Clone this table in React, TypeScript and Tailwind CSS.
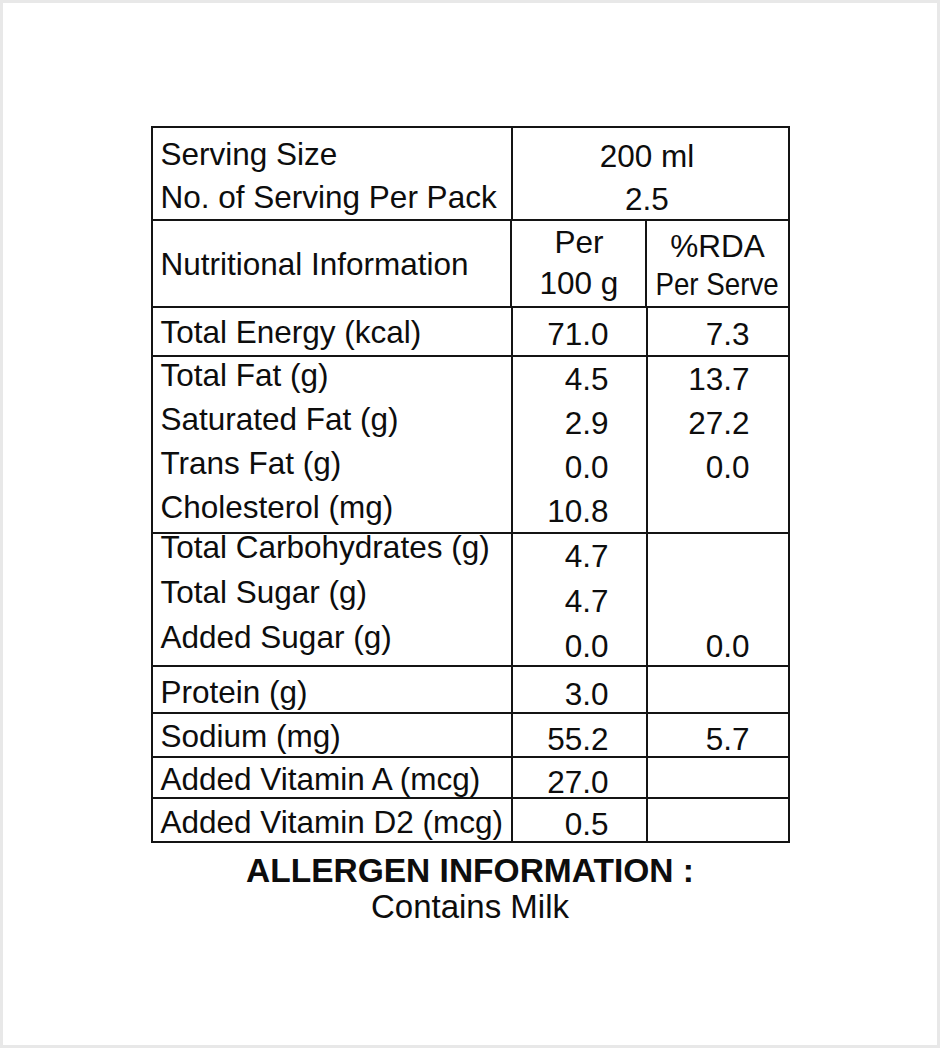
const line = "border-[#141414]";

function Row({ h, top = true, children }: { h: string; top?: boolean; children: React.ReactNode }) {
  return <div className={`flex ${h} ${top ? "border-t-2 " + line : ""}`}>{children}</div>;
}

export default function App() {
  return (
    <div className="w-[940px] h-[1048px] border-[3px] border-[#e8e8e8] bg-white pt-[123px] font-['Liberation_Sans',Arial,sans-serif] text-[#0d0d0d]">
      {/* Nutrition table */}
      <div className={`mx-auto w-[639px] border-2 ${line} text-[31.5px]`}>
        <Row h="h-[91px]" top={false}>
          <div className="w-[358px] pl-2 pt-[5px] leading-[43px]">
            <div>Serving Size</div>
            <div>No. of Serving Per Pack</div>
          </div>
          <div className={`flex-1 border-l-2 ${line} pt-[7px] pr-[6px] leading-[43px] text-center`}>
            <div>200 ml</div>
            <div>2.5</div>
          </div>
        </Row>

        <Row h="h-[87px]">
          <div className="w-[358px] pl-2 pt-[21px] leading-[44px]">Nutritional Information</div>
          <div className={`w-[135px] border-l-2 ${line} pt-[1px] leading-[41px] text-center`}>
            <div>Per</div>
            <div>100 g</div>
          </div>
          <div className={`flex-1 border-l-2 ${line} pt-[6px] leading-[38px] text-center`}>
            <div>%RDA</div>
            <div className="inline-block scale-x-[0.88] whitespace-nowrap">Per Serve</div>
          </div>
        </Row>

        <Row h="h-[49px]">
          <div className="w-[358px] pl-2 pt-[2px] leading-[44px]">Total Energy (kcal)</div>
          <div className={`w-[135px] border-l-2 ${line} pt-[4px] pr-[37px] leading-[44px] text-right`}>71.0</div>
          <div className={`flex-1 border-l-2 ${line} pt-[4px] pr-[38px] leading-[44px] text-right`}>7.3</div>
        </Row>

        <Row h="h-[177px]">
          <div className="w-[358px] pl-2 leading-[44px]">
            <div className="-mt-[4px]">
              <div>Total Fat (g)</div>
              <div>Saturated Fat (g)</div>
              <div>Trans Fat (g)</div>
              <div>Cholesterol (mg)</div>
            </div>
          </div>
          <div className={`w-[135px] border-l-2 ${line} pr-[37px] leading-[44px] text-right`}>
            <div>4.5</div>
            <div>2.9</div>
            <div>0.0</div>
            <div>10.8</div>
          </div>
          <div className={`flex-1 border-l-2 ${line} pr-[38px] leading-[44px] text-right`}>
            <div>13.7</div>
            <div>27.2</div>
            <div>0.0</div>
          </div>
        </Row>

        <Row h="h-[133px]">
          <div className="w-[358px] pl-2 leading-[45px]">
            <div className="-mt-[9px]">
              <div>Total Carbohydrates (g)</div>
              <div>Total Sugar (g)</div>
              <div>Added Sugar (g)</div>
            </div>
          </div>
          <div className={`w-[135px] border-l-2 ${line} pr-[37px] leading-[45px] text-right`}>
            <div>4.7</div>
            <div>4.7</div>
            <div>0.0</div>
          </div>
          <div className={`flex-1 border-l-2 ${line} pt-[90px] pr-[38px] leading-[45px] text-right`}>0.0</div>
        </Row>

        <Row h="h-[47px]">
          <div className="w-[358px] pl-2 pt-[3px] leading-[44px]">Protein (g)</div>
          <div className={`w-[135px] border-l-2 ${line} pt-[5px] pr-[37px] leading-[44px] text-right`}>3.0</div>
          <div className={`flex-1 border-l-2 ${line}`} />
        </Row>

        <Row h="h-[44px]">
          <div className="w-[358px] pl-2 leading-[44px]">Sodium (mg)</div>
          <div className={`w-[135px] border-l-2 ${line} pt-[3px] pr-[37px] leading-[44px] text-right`}>55.2</div>
          <div className={`flex-1 border-l-2 ${line} pt-[3px] pr-[38px] leading-[44px] text-right`}>5.7</div>
        </Row>

        <Row h="h-[41px]">
          <div className="w-[358px] pl-2 -mt-[1px] leading-[44px]">Added Vitamin A (mcg)</div>
          <div className={`w-[135px] border-l-2 ${line} pt-[2px] pr-[37px] leading-[44px] text-right`}>27.0</div>
          <div className={`flex-1 border-l-2 ${line}`} />
        </Row>

        <Row h="h-[44px]">
          <div className="w-[358px] pl-2 pt-[1px] leading-[44px] whitespace-nowrap">Added Vitamin D2 (mcg)</div>
          <div className={`w-[135px] border-l-2 ${line} pt-[3px] pr-[37px] leading-[44px] text-right`}>0.5</div>
          <div className={`flex-1 border-l-2 ${line}`} />
        </Row>
      </div>

      {/* Allergen */}
      <div className="mt-[12px] text-center leading-[31px]">
        <div className="font-bold text-[33.5px]">ALLERGEN INFORMATION :</div>
        <div className="mt-[5px] text-[33px]">Contains Milk</div>
      </div>
    </div>
  );
}
